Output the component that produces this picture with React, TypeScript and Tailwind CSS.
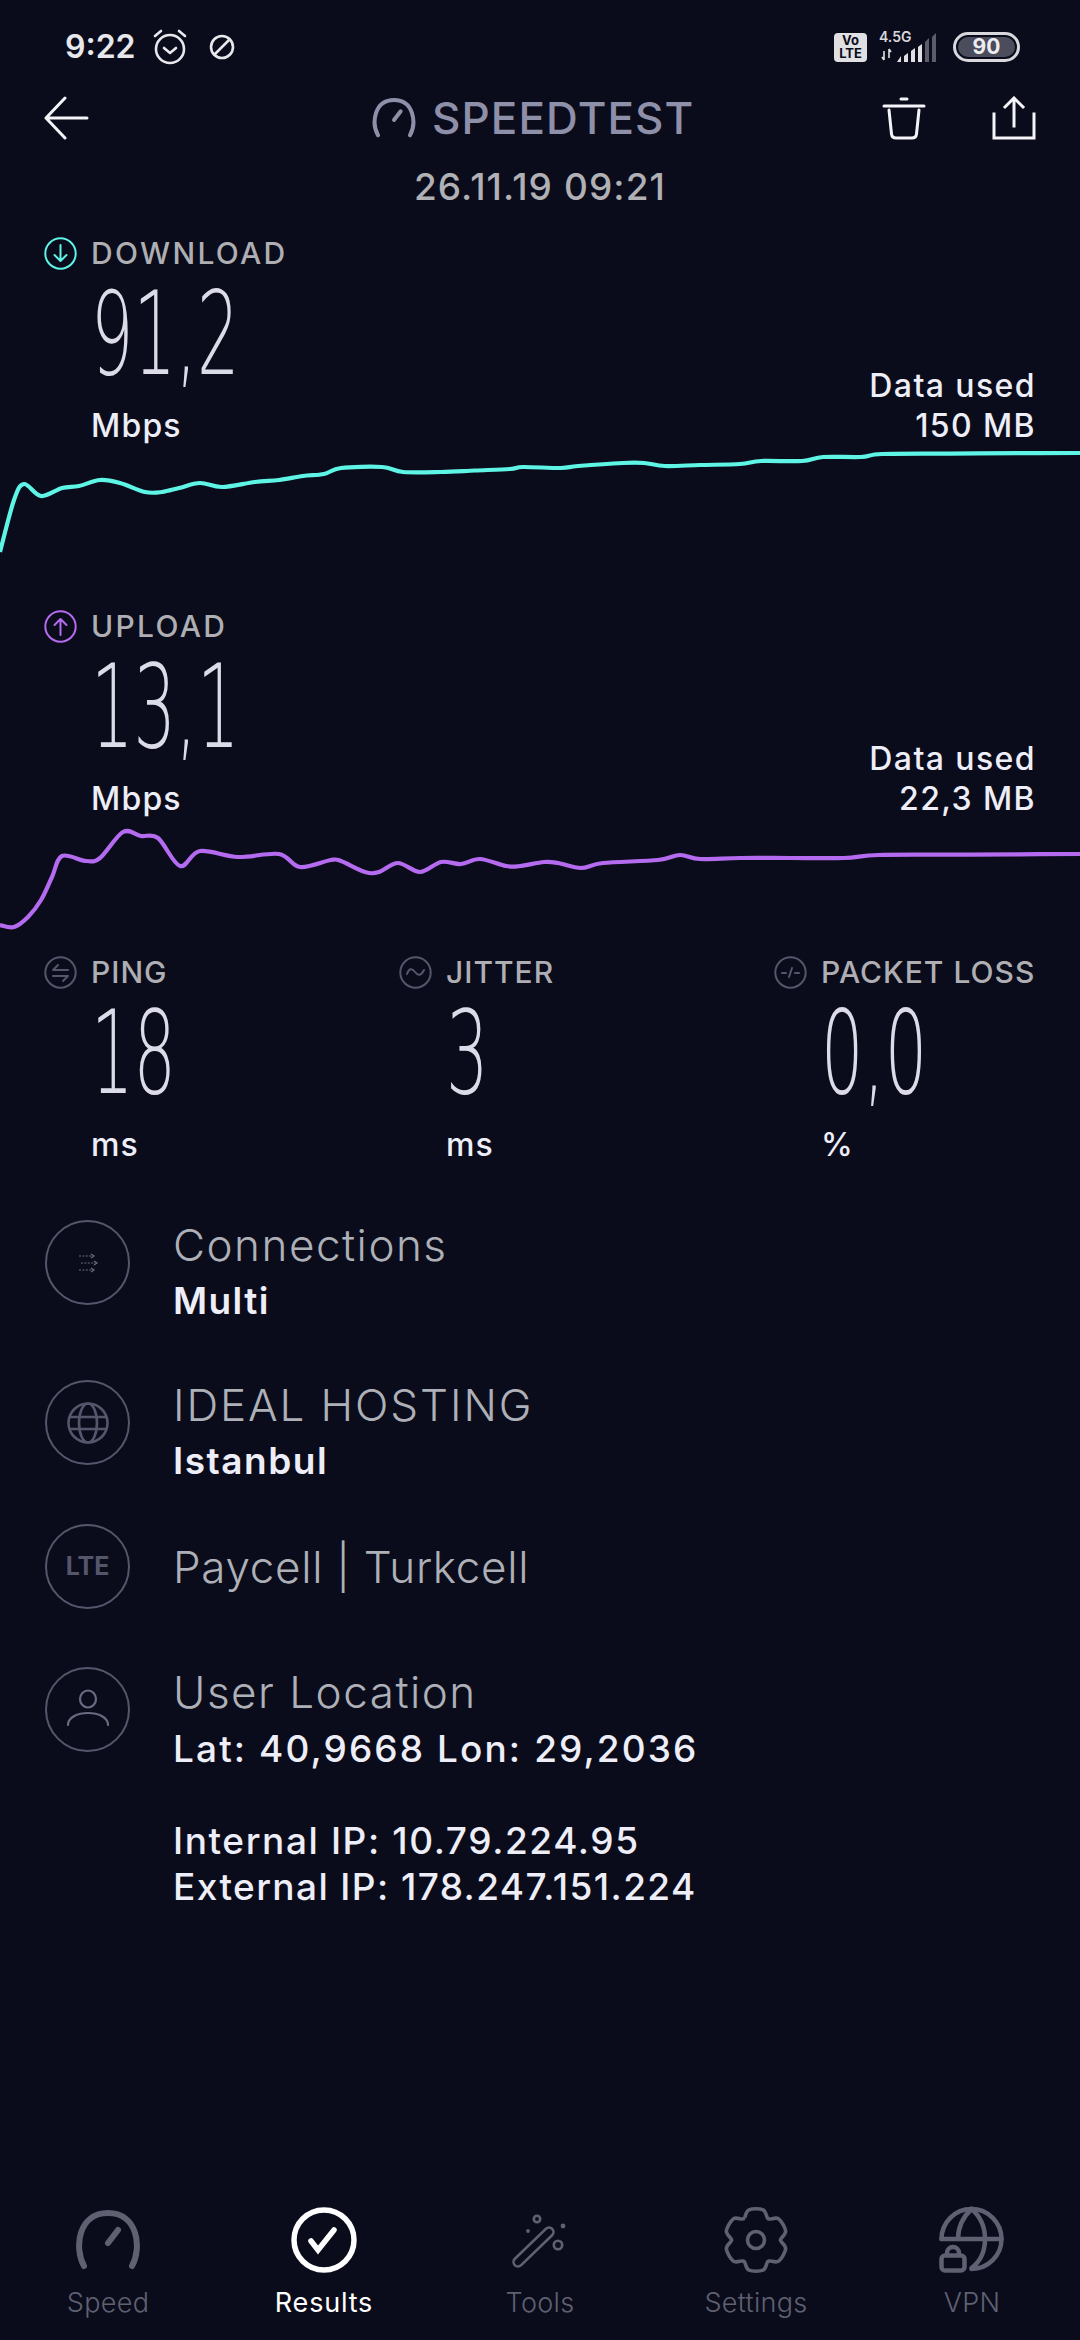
const downloadPoints = [[0,552],[14,500],[24,484],[41,496],[62,488],[79,486],[100,480],[120,483],[145,492],[162,492],[179,488],[200,483],[222,487],[255,482],[279,480],[303,476],[324,474],[341,468],[382,467],[403,472],[441,472],[475,470.5],[510,469],[523,467],[561,468],[578,466],[623,463],[644,463],[665,466],[700,465],[740,464],[761,461],[802,461],[823,457],[861,457],[882,454],[950,453.6],[1020,453.2],[1080,453]];
const uploadPoints = [[0,925],[14,927],[28,917],[41,900],[52,877],[62,856],[86,861],[100,858],[123,832],[141,836],[158,838],[180,866],[200,851],[238,857],[279,854],[300,867],[331,860],[341,861],[365,872],[379,872],[398,863],[420,872],[441,862],[461,864],[480,859],[506,866],[520,866],[544,862],[558,863],[581,868],[603,863],[658,860],[680,855],[700,859],[740,858],[790,858],[844,858],[878,855],[950,854.7],[1020,854.3],[1080,854]];

// Catmull-Rom para que la curva no quede quebrada
const smoothPath = (pts: number[][]) => {
    let d = `M${pts[0][0]} ${pts[0][1]}`;
    for (let i = 0; i < pts.length - 1; i++) {
        const p0 = pts[Math.max(0, i - 1)];
        const p1 = pts[i];
        const p2 = pts[i + 1];
        const p3 = pts[Math.min(pts.length - 1, i + 2)];
        const c1x = p1[0] + (p2[0] - p0[0]) / 6;
        const c1y = p1[1] + (p2[1] - p0[1]) / 6;
        const c2x = p2[0] - (p3[0] - p1[0]) / 6;
        const c2y = p2[1] - (p3[1] - p1[1]) / 6;
        d += ` C${c1x} ${c1y} ${c2x} ${c2y} ${p2[0]} ${p2[1]}`;
    }
    return d;
};

// Contorno del engranaje: seis dientes alrededor de (35,35)
const gearPoints = () => {
    const pts: number[][] = [];
    const polar = (r: number, deg: number) => [35 + r * Math.cos((deg * Math.PI) / 180), 35 + r * Math.sin((deg * Math.PI) / 180)];
    for (let i = 0; i < 6; i++) {
        const a = -90 + i * 60;
        pts.push(polar(25, a - 27), polar(31, a - 13), polar(31, a + 13), polar(25, a + 27));
    }
    pts.push(pts[0]);
    return pts;
};

const Gauge = ({ className, width }: { className: string; width: number }) => (
    <svg viewBox="0 0 66 60" width={width} className={className} fill="none" stroke="currentColor" strokeLinecap="round">
        <path d="M9 56 C-1 38 3 3 33 3 C63 3 67 38 57 56" strokeWidth="6" />
        <path d="M33 33 L43 20" strokeWidth="6" />
    </svg>
);

const SmallCircle = ({ color, children }: { color: string; children: React.ReactNode }) => (
    <svg viewBox="0 0 33 33" width="33" height="33" fill="none" stroke={color} strokeWidth="2" strokeLinecap="round" strokeLinejoin="round" className="shrink-0">
        <circle cx="16.5" cy="16.5" r="15.2" />
        {children}
    </svg>
);

const Label = ({ icon, text, wide }: { icon: React.ReactNode; text: string; wide?: boolean }) => (
    <div className="flex items-center gap-[14px] h-[33px]">
        {icon}
        <span className={`text-[30px] leading-[33px] font-medium text-[#aeaeb3] whitespace-nowrap ${wide ? 'tracking-[2.3px]' : 'tracking-[1px]'}`}>{text}</span>
    </div>
);

const BigValue = ({ value }: { value: string }) => (
    <div className="mt-[22px] h-[84px] text-[115px] leading-[84px] font-extralight font-['DejaVu_Sans',sans-serif] text-[#dcdce8] origin-left scale-x-[0.58] whitespace-nowrap">{value}</div>
);

const Unit = ({ text }: { text: string }) => (
    <div className="mt-[30px] h-[40px] text-[32px] leading-[40px] font-medium tracking-[1.2px] text-[#eeeef8]">{text}</div>
);

const SpeedSection = ({ icon, label, value, used, points, color, viewBox, className }: {
    icon: React.ReactNode; label: string; value: string; used: string; points: number[][]; color: string; viewBox: string; className: string;
}) => (
    <section className={className}>
        <div className="pl-[44px] pr-[44px]">
            <Label wide icon={icon} text={label} />
            <div className="flex justify-between items-end pl-[47px]">
                <div>
                    <BigValue value={value} />
                    <Unit text="Mbps" />
                </div>
                <div className="text-right text-[32px] leading-[40px] font-medium tracking-[1.4px] text-[#eeeef8]">
                    <div>Data used</div>
                    <div>{used}</div>
                </div>
            </div>
        </div>
        <svg viewBox={viewBox} width="1080" height="120" className="block" fill="none">
            <path d={smoothPath(points)} stroke={color} strokeWidth="4.2" strokeLinejoin="round" />
        </svg>
    </section>
);

const Stat = ({ icon, label, value, unit, className }: { icon: React.ReactNode; label: string; value: string; unit: string; className: string }) => (
    <div className={className}>
        <Label icon={icon} text={label} />
        <div className="pl-[47px]">
            <BigValue value={value} />
            <Unit text={unit} />
        </div>
    </div>
);

const RoundIcon = ({ children }: { children: React.ReactNode }) => (
    <div className="w-[85px] h-[85px] rounded-full border-2 border-[#55566c] flex items-center justify-center shrink-0">
        {children}
    </div>
);

const InfoRow = ({ icon, title, className, titleClass, children }: { icon: React.ReactNode; title: string; className: string; titleClass: string; children?: React.ReactNode }) => (
    <div className={`flex gap-[43px] pl-[45px] ${className}`}>
        <RoundIcon>{icon}</RoundIcon>
        <div>
            <div className={`text-[44px] leading-[50px] font-light text-[#aeb0b8] whitespace-nowrap ${titleClass}`}>{title}</div>
            {children}
        </div>
    </div>
);

const NavItem = ({ icon, text, active }: { icon: React.ReactNode; text: string; active?: boolean }) => (
    <div className="flex flex-col items-center">
        <div className="h-[70px] flex items-center justify-center">{icon}</div>
        <div className={`mt-[8px] h-[40px] leading-[40px] text-[27px] ${active ? 'text-white tracking-[0.8px]' : 'text-[#5f6072] font-light tracking-[0.3px]'}`}>{text}</div>
    </div>
);

export default function App() {
    return (
        <div className="w-[1080px] h-[2340px] bg-[#0a0c1b] flex flex-col overflow-hidden font-[Inter,sans-serif]">
            {/* Barra de estado */}
            <div className="h-[94px] flex items-center justify-between pl-[65px] pr-[60px] shrink-0">
                <div className="flex items-center">
                    <span className="text-[32px] font-semibold text-[#e8e8ec] leading-none">9:22</span>
                    <svg viewBox="0 0 38 38" width="38" height="38" className="ml-[15px]" fill="none" stroke="#e8e8ec" strokeWidth="2.6" strokeLinecap="round" strokeLinejoin="round">
                        <circle cx="19" cy="21" r="14" />
                        <path d="M13 20l6 5 6-5" />
                        <path d="M4 8l6-5M34 8l-6-5" />
                    </svg>
                    <svg viewBox="0 0 26 26" width="26" height="26" className="ml-[20px]" fill="none" stroke="#e8e8ec" strokeWidth="2.6" strokeLinecap="round">
                        <circle cx="13" cy="13" r="11" />
                        <path d="M5.5 20.5L20.5 5.5" />
                    </svg>
                </div>
                <div className="flex items-center">
                    <div className="w-[33px] h-[29px] rounded-[4px] bg-[#e0e0e2] text-[#0a0c1b] text-[13px] leading-[13px] font-bold text-center flex flex-col justify-center">
                        <span>Vo</span>
                        <span>LTE</span>
                    </div>
                    <div className="ml-[12px] relative w-[60px] h-[30px]">
                        <span className="absolute left-0 top-[-3px] text-[14px] leading-[16px] font-semibold text-[#d8d8dc]">4.5G</span>
                        <svg viewBox="0 0 60 30" width="60" height="30" className="block">
                            <path d="M5 19v9M3 25l2 3M10 17v9M10 17l2 3" stroke="#e0e0e2" strokeWidth="1.6" fill="none" />
                            <path d="M18 30h4v-6zM25 30h4v-9l-4 3zM32 30h4v-14l-4 3z" fill="#e0e0e2" />
                            <path d="M39 30h4V12l-4 3z" fill="#e0e0e2" />
                            <path d="M46 30h4V6l-4 4zM53 30h4V1l-4 4z" fill="#5c5d6a" />
                        </svg>
                    </div>
                    <div className="ml-[14px] w-[67px] h-[30px] rounded-full border-[3px] border-[#d8d8dc] p-[2px]">
                        <div className="h-full rounded-full bg-[#4b4c5c] text-center text-[21px] leading-[20px] font-bold text-[#eeeef2]">90</div>
                    </div>
                </div>
            </div>

            {/* Cabecera */}
            <div className="h-[48px] flex items-center pl-[44px] pr-[44px] shrink-0">
                <svg viewBox="0 0 45 44" width="45" height="44" fill="none" stroke="#f4f4f8" strokeWidth="3" strokeLinecap="round" strokeLinejoin="round">
                    <path d="M43 22H2M21 2L2 22l19 20" />
                </svg>
                <div className="flex items-center ml-[283px]">
                    <Gauge width={44} className="text-[#8e8fa8] mr-[16px]" />
                    <span className="text-[44px] leading-[48px] font-medium tracking-[1.1px] text-[#8e8fa8]">SPEEDTEST</span>
                </div>
                <div className="flex items-center gap-[66px] ml-auto">
                    <svg viewBox="0 0 44 44" width="44" height="44" fill="none" stroke="#f4f4f8" strokeWidth="3" strokeLinecap="round" strokeLinejoin="round">
                        <path d="M19 3h6" />
                        <path d="M2 10h40" />
                        <path d="M7 14l2.5 24q.5 4 4.5 4h16q4 0 4.5-4L37 14" />
                    </svg>
                    <svg viewBox="0 0 44 44" width="44" height="44" fill="none" stroke="#f4f4f8" strokeWidth="3" strokeLinecap="square" strokeLinejoin="miter">
                        <path d="M22 30V3M13 11l9-9 9 9" />
                        <path d="M2 18v24h40V18" />
                    </svg>
                </div>
            </div>
            <div className="mt-[20px] h-[50px] leading-[50px] text-center text-[37px] font-medium tracking-[1.1px] text-[#b0b0b5] shrink-0">26.11.19 09:21</div>

            <SpeedSection
                className="mt-[25px] mb-[44px]"
                icon={<SmallCircle color="#5ef5e6"><path d="M16.5 8v16M10.5 18l6 6 6-6" /></SmallCircle>}
                label="DOWNLOAD"
                value="91,2"
                used="150 MB"
                points={downloadPoints}
                color="#5ef5e6"
                viewBox="0 446 1080 120"
            />
            <SpeedSection
                className="mb-[17px]"
                icon={<SmallCircle color="#b56bf0"><path d="M16.5 25V9M10.5 15l6-6 6 6" /></SmallCircle>}
                label="UPLOAD"
                value="13,1"
                used="22,3 MB"
                points={uploadPoints}
                color="#b56bf0"
                viewBox="0 819 1080 120"
            />

            {/* Ping, jitter, pérdida */}
            <div className="flex pl-[44px]">
                <Stat
                    className="w-[355px]"
                    icon={<SmallCircle color="#55566c"><path d="M9 14h15M9 14l5-5M24 20H9M24 20l-5 5" /></SmallCircle>}
                    label="PING"
                    value="18"
                    unit="ms"
                />
                <Stat
                    className="w-[375px]"
                    icon={<SmallCircle color="#55566c"><path d="M8 18c2-6 5-6 8-2s6 4 9-2" /></SmallCircle>}
                    label="JITTER"
                    value="3"
                    unit="ms"
                />
                <Stat
                    className="w-[260px]"
                    icon={<SmallCircle color="#55566c"><path d="M8 17h4M15 21l3-9M21 17h4" /></SmallCircle>}
                    label="PACKET LOSS"
                    value="0,0"
                    unit="%"
                />
            </div>

            {/* Detalles */}
            <InfoRow
                className="mt-[55px]"
                titleClass="tracking-[1.5px]"
                icon={
                    <svg viewBox="0 0 24 24" width="24" height="24" fill="none" stroke="#6a6b80" strokeWidth="1.2">
                        <path d="M3 5h14M5 12h15M3 19h14" strokeDasharray="2 1.4" />
                        <path d="M15 3l3 2-3 2M18 10l3 2-3 2M15 17l3 2-3 2" />
                    </svg>
                }
                title="Connections"
            >
                <div className="mt-[6px] h-[50px] text-[37px] leading-[50px] font-semibold tracking-[1.4px] text-[#eeeef8]">Multi</div>
            </InfoRow>
            <InfoRow
                className="mt-[54px]"
                titleClass="tracking-[1.9px]"
                icon={
                    <svg viewBox="0 0 42 42" width="42" height="42" fill="none" stroke="#55566c" strokeWidth="2.6">
                        <circle cx="21" cy="21" r="19.5" />
                        <ellipse cx="21" cy="21" rx="9" ry="19.5" />
                        <path d="M2 15h38M2 27h38" />
                    </svg>
                }
                title="IDEAL HOSTING"
            >
                <div className="mt-[6px] h-[50px] text-[37px] leading-[50px] font-semibold tracking-[1.5px] text-[#eeeef8]">Istanbul</div>
            </InfoRow>
            <InfoRow
                className="mt-[38px] items-center"
                titleClass="tracking-[0.7px]"
                icon={<span className="text-[25px] font-bold text-[#55566c]">LTE</span>}
                title="Paycell | Turkcell"
            />
            <InfoRow
                className="mt-[58px]"
                titleClass="tracking-[1.5px]"
                icon={
                    <svg viewBox="0 0 42 42" width="42" height="42" fill="none" stroke="#6a6b80" strokeWidth="2.2" strokeLinecap="round">
                        <ellipse cx="21" cy="10" rx="8" ry="8.5" />
                        <path d="M1 36c0-16 40-16 40 0" />
                    </svg>
                }
                title="User Location"
            >
                <div className="mt-[9px] text-[37px] leading-[46px] font-medium text-[#eeeef8] whitespace-nowrap">
                    <div className="tracking-[2.1px]">Lat: 40,9668 Lon: 29,2036</div>
                    <div className="mt-[46px] tracking-[1.6px]">Internal IP: 10.79.224.95</div>
                    <div className="tracking-[1.4px]">External IP: 178.247.151.224</div>
                </div>
            </InfoRow>

            {/* Navegación inferior */}
            <nav className="mt-auto grid grid-cols-5 pb-[17px]">
                <NavItem icon={<Gauge width={66} className="text-[#5f6072]" />} text="Speed" />
                <NavItem
                    active
                    text="Results"
                    icon={
                        <svg viewBox="0 0 66 66" width="66" height="66" fill="none" stroke="#fff" strokeWidth="5.5" strokeLinecap="round">
                            <circle cx="33" cy="33" r="30" />
                            <path d="M20 34l7 9 16-20" />
                        </svg>
                    }
                />
                <NavItem
                    text="Tools"
                    icon={
                        <svg viewBox="0 0 60 60" width="60" height="60" fill="none" stroke="#5f6072" strokeWidth="2.6">
                            <rect x="-26" y="-4.5" width="52" height="9" rx="4.5" transform="translate(23.5 37) rotate(-44)" />
                            <circle cx="27" cy="9" r="3.2" />
                            <circle cx="53" cy="16" r="2.4" fill="#5f6072" stroke="none" />
                            <circle cx="48" cy="35" r="4.2" />
                            <circle cx="18" cy="21" r="1.9" fill="#5f6072" stroke="none" />
                        </svg>
                    }
                />
                <NavItem
                    text="Settings"
                    icon={
                        <svg viewBox="0 0 70 70" width="70" height="70" fill="none" stroke="#5f6072" strokeWidth="3.6" strokeLinejoin="round">
                            <path d={smoothPath(gearPoints())} />
                            <circle cx="35" cy="35" r="8.5" />
                        </svg>
                    }
                />
                <NavItem
                    text="VPN"
                    icon={
                        <svg viewBox="0 0 70 70" width="70" height="70" fill="none" stroke="#5f6072" strokeWidth="4.5" strokeLinecap="round" strokeLinejoin="round">
                            <path d="M4.5 34A30 30 0 1 1 34.5 64" />
                            <path d="M4.5 34H64.5" />
                            <path d="M34.5 4C26 12 21 22 21 34" />
                            <path d="M34.5 4C44 12 48 22 48 34C48 46 44 56 34.5 63" />
                            <rect x="4.5" y="50.5" width="23" height="15" rx="3.5" />
                            <path d="M10 50V48a6 6 0 0 1 12 0V50" />
                        </svg>
                    }
                />
            </nav>
        </div>
    );
}
